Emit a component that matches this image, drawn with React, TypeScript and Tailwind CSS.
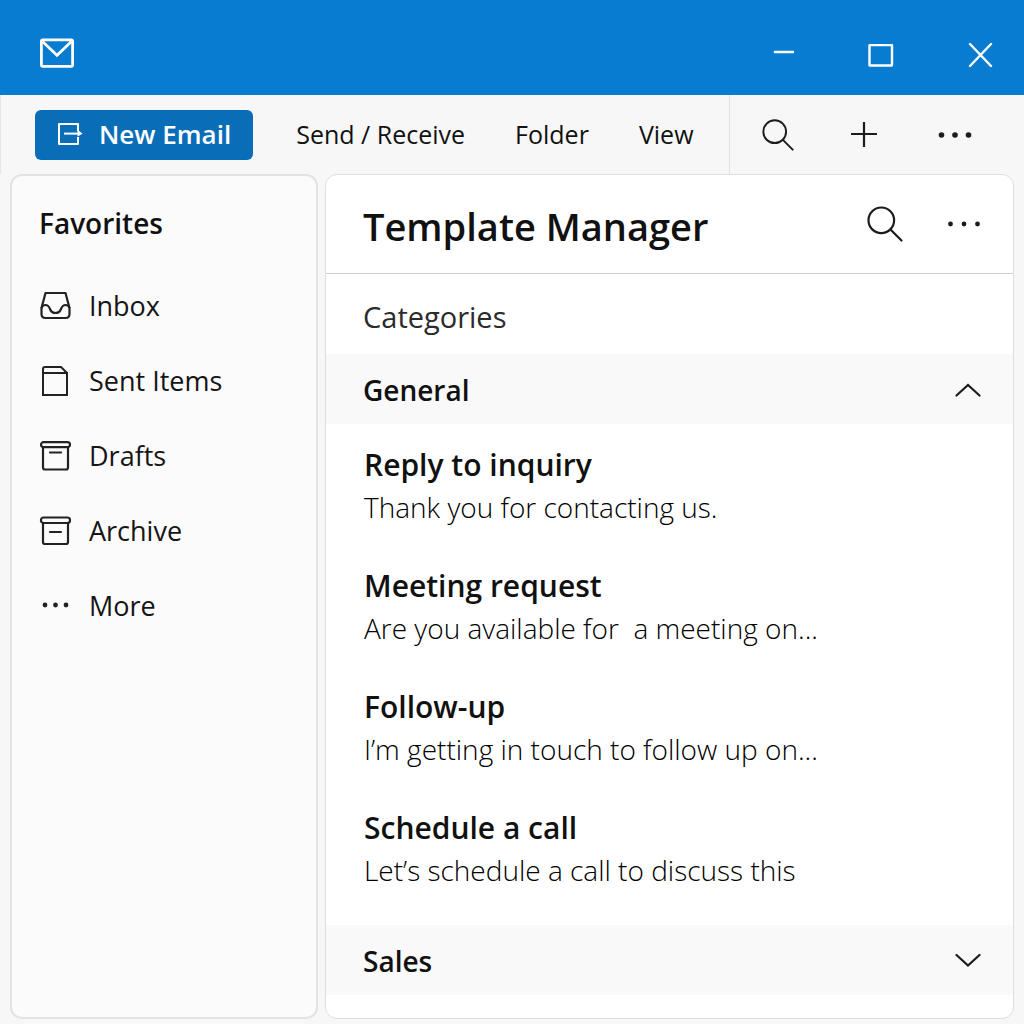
import { useState, type ReactNode } from "react";

const FAVORITES = [
  { label: "Inbox", icon: <InboxIcon /> },
  { label: "Sent Items", icon: <SentIcon /> },
  { label: "Drafts", icon: <DraftsIcon /> },
  { label: "Archive", icon: <ArchiveIcon /> },
  { label: "More", icon: <MoreIcon /> },
];

const TEMPLATES = [
  { title: "Reply to inquiry", preview: "Thank you for contacting us." },
  { title: "Meeting request", preview: "Are you available for  a meeting on..." },
  { title: "Follow-up", preview: "I’m getting in touch to follow up on..." },
  { title: "Schedule a call", preview: "Let’s schedule a call to discuss this" },
];

function MailIcon() {
  return (
    <svg width="34" height="30" viewBox="0 0 34 30" fill="none" stroke="white" strokeWidth="2.8" aria-hidden="true">
      <rect x="1.4" y="1.9" width="31.2" height="26.4" rx="1.5" />
      <path d="M2.5 3.5 17 17.2 31.5 3.5" />
    </svg>
  );
}

function NewEmailIcon() {
  return (
    <svg width="26" height="24" viewBox="0 0 26 24" fill="none" stroke="white" strokeWidth="2" strokeLinejoin="round" aria-hidden="true">
      <path d="M21 8V1H2v20h19v-7" />
      <path d="M7 10.6h15" />
      <path d="M20.5 6.5 25.5 10.8 20.5 13.6z" fill="white" stroke="none" />
    </svg>
  );
}

function SearchIcon({ size }: { size: number }) {
  return (
    <svg width={size} height={size} viewBox="0 0 36 36" fill="none" stroke="#1c1c1c" strokeWidth="2.2" strokeLinecap="round" aria-hidden="true">
      <circle cx="14.3" cy="14.3" r="12.8" />
      <path d="M23.5 23.5 34.5 34.5" />
    </svg>
  );
}

function DotsIcon({ radius }: { radius: number }) {
  return (
    <svg width="34" height="8" viewBox="0 0 34 8" fill="#1c1c1c" aria-hidden="true">
      <circle cx="3.5" cy="4" r={radius} />
      <circle cx="17" cy="4" r={radius} />
      <circle cx="30.5" cy="4" r={radius} />
    </svg>
  );
}

function InboxIcon() {
  return (
    <svg width="32" height="32" viewBox="0 0 32 32" fill="none" stroke="#222" strokeWidth="2.2" strokeLinejoin="round" aria-hidden="true">
      <path d="M6.5 2h20l4 15v6q0 4-4 4h-20q-4 0-4-4v-6z" />
      <path d="M2.5 17q1-3 4-3 3 0 4.5 4t5.5 4 5.5-4 4.5-4q3 0 4 3" />
    </svg>
  );
}

function SentIcon() {
  return (
    <svg width="32" height="32" viewBox="0 0 32 32" fill="none" stroke="#222" strokeWidth="2" aria-hidden="true">
      <path d="M4 7v22h24V7z" />
      <path d="M4 7V3q0-2 2-2h16l6 6" />
    </svg>
  );
}

function DraftsIcon() {
  return (
    <svg width="32" height="32" viewBox="0 0 32 32" fill="none" stroke="#222" strokeWidth="2.2" strokeLinecap="round" aria-hidden="true">
      <rect x="2" y="1.2" width="29" height="5" rx="2.5" />
      <path d="M4 6v20.5q0 2 2 2h21q2 0 2-2V6" />
      <path d="M11 11.5h11" />
    </svg>
  );
}

function ArchiveIcon() {
  return (
    <svg width="32" height="32" viewBox="0 0 32 32" fill="none" stroke="#222" strokeWidth="2.2" strokeLinecap="round" aria-hidden="true">
      <rect x="2" y="1.5" width="29" height="5.5" rx="2.5" />
      <path d="M4 7.5V26q0 2 2 2h21q2 0 2-2V7.5" />
      <path d="M11 16h11" />
    </svg>
  );
}

function MoreIcon() {
  return (
    <svg width="32" height="32" viewBox="0 0 32 32" fill="#222" aria-hidden="true">
      <circle cx="6" cy="14" r="2.4" />
      <circle cx="16.5" cy="14" r="2.4" />
      <circle cx="27" cy="14" r="2.4" />
    </svg>
  );
}

function Chevron({ open }: { open: boolean }) {
  return (
    <svg width="26" height="16" viewBox="0 0 26 16" fill="none" stroke="#1c1c1c" strokeWidth="2.2" strokeLinecap="round" aria-hidden="true">
      <path d={open ? "M1.5 13.5 13 3l11.5 10.5" : "M1.5 2 13 12.5 24.5 2"} />
    </svg>
  );
}

function TitleBar() {
  return (
    <header className="flex h-[95px] items-center justify-between bg-[#087cd1] pr-[30px] pl-10">
      <div className="pt-[10px]">
        <MailIcon />
      </div>
      <div className="flex items-center gap-[74px] pt-4">
        <button aria-label="Minimize" className="pb-2">
          <svg width="22" height="12" viewBox="0 0 22 12" stroke="white" strokeWidth="2.6" strokeLinecap="round" aria-hidden="true">
            <path d="M3 6h18" />
          </svg>
        </button>
        <button aria-label="Maximize">
          <svg width="26" height="24" viewBox="0 0 26 24" fill="none" stroke="white" strokeWidth="2.4" aria-hidden="true">
            <rect x="1.5" y="1" width="22.5" height="20.5" rx="0.5" />
          </svg>
        </button>
        <button aria-label="Close">
          <svg width="26" height="26" viewBox="0 0 26 26" stroke="white" strokeWidth="2.4" strokeLinecap="round" aria-hidden="true">
            <path d="M2 1l21 22M23 1 2 23" />
          </svg>
        </button>
      </div>
    </header>
  );
}

function Toolbar() {
  return (
    <div className="flex h-[79px] items-stretch justify-between border-l border-[#e6e6e6] pl-[34px]">
      <nav className="flex items-center text-[25px] text-[#111]">
        <button className="flex h-[50px] items-center rounded-md bg-[#0a6db7] px-[22px] text-[26px] font-semibold text-white">
          <NewEmailIcon />
          <span className="ml-4">New Email</span>
        </button>
        <button className="ml-[43px]">Send / Receive</button>
        <button className="ml-[50px]">Folder</button>
        <button className="ml-[50px]">View</button>
      </nav>
      <div className="flex items-center gap-[56px] border-l border-[#e2e2e2] pr-[52px] pl-8">
        <button aria-label="Search">
          <SearchIcon size={32} />
        </button>
        <button aria-label="Add">
          <svg width="28" height="28" viewBox="0 0 28 28" stroke="#1c1c1c" strokeWidth="2.2" aria-hidden="true">
            <path d="M14 1v25M1 13h26" />
          </svg>
        </button>
        <button aria-label="More commands" className="pl-1">
          <DotsIcon radius={2.8} />
        </button>
      </div>
    </div>
  );
}

function Sidebar() {
  return (
    <aside className="w-[308px] shrink-0 rounded-xl border-2 border-[#e3e3e3] bg-[#fbfbfb] px-[27px] pt-[27px]">
      <h2 className="text-[28px] leading-10 font-semibold text-[#111]">Favorites</h2>
      <ul className="mt-[26px]">
        {FAVORITES.map((item) => (
          <li key={item.label}>
            <a href="#" className="flex h-[75px] items-center gap-[18px] text-[27px] text-[#151515]">
              {item.icon}
              {item.label}
            </a>
          </li>
        ))}
      </ul>
    </aside>
  );
}

function Category({ name, defaultOpen = false, children }: { name: string; defaultOpen?: boolean; children?: ReactNode }) {
  const [open, setOpen] = useState(defaultOpen);

  return (
    <section>
      <button
        aria-expanded={open}
        onClick={() => setOpen(!open)}
        className="flex h-[70px] w-full items-center justify-between bg-[#f9f9f9] pt-[2px] pr-8 pl-[37px]"
      >
        <span className="text-[28px] font-semibold">{name}</span>
        <Chevron open={open} />
      </button>
      {open && children}
    </section>
  );
}

function TemplateManager() {
  return (
    <main className="min-w-0 flex-1 rounded-xl border border-[#dedede] bg-white text-[#111]">
      <div className="flex h-[99px] items-center justify-between border-b border-[#cfcfcf] pr-8 pl-[37px]">
        <h1 className="pt-1 text-[38px] font-semibold">Template Manager</h1>
        <div className="flex items-center gap-11">
          <button aria-label="Search templates">
            <SearchIcon size={36} />
          </button>
          <button aria-label="More options">
            <DotsIcon radius={2.4} />
          </button>
        </div>
      </div>
      <h2 className="flex h-20 items-center pt-[6px] pl-[37px] text-[29px] text-[#2b2b2b]">Categories</h2>
      <Category name="General" defaultOpen>
        <ul className="flex flex-col gap-9 pt-[21px] pb-8 pl-[38px]">
          {TEMPLATES.map((item) => (
            <li key={item.title}>
              <h3 className="text-[30px] leading-10 font-semibold">{item.title}</h3>
              <p className="text-[28px] leading-[45px] font-light whitespace-pre text-black">{item.preview}</p>
            </li>
          ))}
        </ul>
      </Category>
      <Category name="Sales" />
    </main>
  );
}

export default function App() {
  return (
    <div className="flex min-h-screen flex-col bg-[#f7f7f7] font-['Open_Sans','Noto_Sans',sans-serif]">
      <TitleBar />
      <Toolbar />
      <div className="flex flex-1 gap-[7px] pr-2.5 pb-[5px] pl-2.5">
        <Sidebar />
        <TemplateManager />
      </div>
    </div>
  );
}
